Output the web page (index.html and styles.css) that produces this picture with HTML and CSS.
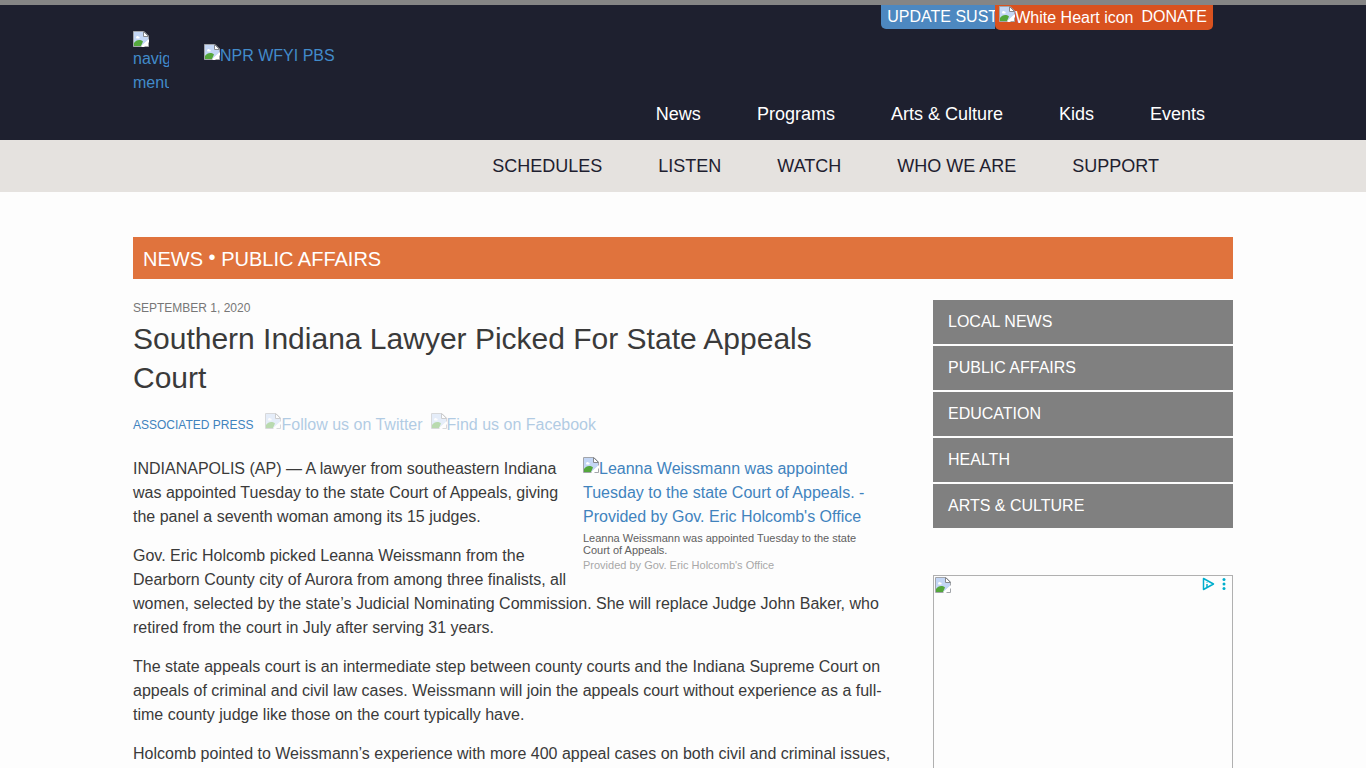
FILE: index.html
```html
<!DOCTYPE html>
<html lang="en">
<head>
<meta charset="utf-8">
<title>Southern Indiana Lawyer Picked For State Appeals Court</title>
<link rel="stylesheet" href="styles.css">
</head>
<body>
<svg class="defs" aria-hidden="true">
  <symbol id="missing" viewBox="0 0 16 16">
    <path d="M0.5 0.5H11L15.5 5V15.5H0.5Z" fill="#fff" stroke="#a2a5aa"/>
    <path d="M1 1H10.500V5.500H15V9L8 15H1Z" fill="#c3d6f5"/>
    <path d="M1 15V12C3 9 7 8 10 10.500L8 15Z" fill="#54a73c"/>
    <path d="M3 6.500C3 5 5 4.500 5.500 5.500C7 5.500 7 7.500 6 7.500H3.500Z" fill="#fff"/>
    <path d="M10.500 0.500V5.500H15.500Z" fill="#fff" stroke="#85888d"/>
    <path d="M16 8L8 16H11L16 11Z" fill="#fff"/>
  </symbol>
</svg>
<header class="masthead">
  <div class="container masthead-inner">
    <div class="brand-row">
      <a class="menu-link" href="#"><svg class="missing"><use href="#missing"/></svg>navigation menu</a>
      <a class="logo-link" href="#"><svg class="missing"><use href="#missing"/></svg>NPR WFYI PBS</a>
      <div class="actions">
        <a class="update" href="#">UPDATE SUST</a>
        <a class="donate" href="#"><span><svg class="missing"><use href="#missing"/></svg>White Heart icon</span><span>DONATE</span></a>
      </div>
    </div>
    <nav class="main-nav" aria-label="Topics">
      <a href="#">News</a><a href="#">Programs</a><a href="#">Arts &amp; Culture</a><a href="#">Kids</a><a href="#">Events</a>
    </nav>
  </div>
</header>
<div class="subbar">
  <nav class="container sub-nav" aria-label="Station">
    <a href="#">SCHEDULES</a><a href="#">LISTEN</a><a href="#">WATCH</a><a href="#">WHO WE ARE</a><a href="#">SUPPORT</a>
  </nav>
</div>
<main class="container">
  <div class="section-title"><a href="#">NEWS</a> <span class="dot">•</span> <a href="#">PUBLIC AFFAIRS</a></div>
  <div class="columns">
    <article class="story">
      <div class="date">SEPTEMBER 1, 2020</div>
      <h1>Southern Indiana Lawyer Picked For State Appeals Court</h1>
      <div class="byline">
        <a class="author" href="#">ASSOCIATED PRESS</a>
        <a class="social" href="#"><svg class="missing"><use href="#missing"/></svg>Follow us on Twitter</a>
        <a class="social" href="#"><svg class="missing"><use href="#missing"/></svg>Find us on Facebook</a>
      </div>
      <div class="body-text">
        <figure>
          <a href="#"><svg class="missing"><use href="#missing"/></svg>Leanna Weissmann was appointed Tuesday to the state Court of Appeals. - Provided by Gov. Eric Holcomb's Office</a>
          <figcaption><span class="caption">Leanna Weissmann was appointed Tuesday to the state Court of Appeals.</span><span class="credit">Provided by Gov. Eric Holcomb's Office</span></figcaption>
        </figure>
        <p>INDIANAPOLIS (AP) — A lawyer from southeastern Indiana was appointed Tuesday to the state Court of Appeals, giving the panel a seventh woman among its 15 judges.</p>
        <p>Gov. Eric Holcomb picked Leanna Weissmann from the Dearborn County city of Aurora from among three finalists, all women, selected by the state’s Judicial Nominating Commission. She will replace Judge John Baker, who retired from the court in July after serving 31 years.</p>
        <p>The state appeals court is an intermediate step between county courts and the Indiana Supreme Court on appeals of criminal and civil law cases. Weissmann will join the appeals court without experience as a full-time county judge like those on the court typically have.</p>
        <p>Holcomb pointed to Weissmann’s experience with more 400 appeal cases on both civil and criminal issues,</p>
      </div>
    </article>
    <aside class="sidebar">
      <nav class="side-nav" aria-label="News sections">
        <a href="#">LOCAL NEWS</a><a href="#">PUBLIC AFFAIRS</a><a href="#">EDUCATION</a><a href="#">HEALTH</a><a href="#">ARTS &amp; CULTURE</a>
      </nav>
      <div class="ad">
        <svg class="missing"><use href="#missing"/></svg>
        <svg class="adchoices" viewBox="0 0 28 14" aria-hidden="true">
          <path d="M2.500 1.500L12.500 7L2.500 12.500Z" fill="none" stroke="#00aecd" stroke-width="1.500" stroke-linejoin="round"/>
          <path d="M6 5V5.500M6 7V10" stroke="#00aecd" stroke-width="1.500" fill="none"/>
          <circle cx="23" cy="2.500" r="1.500" fill="#00aecd"/><circle cx="23" cy="7" r="1.500" fill="#00aecd"/><circle cx="23" cy="11.500" r="1.500" fill="#00aecd"/>
        </svg>
      </div>
    </aside>
  </div>
</main>
</body>
</html>
```
FILE: styles.css
```css
* { box-sizing: border-box; }
body {
  margin: 0;
  background: #fdfdfd;
  color: #3a3a3a;
  font: 16px/24px "Liberation Sans", Arial, sans-serif;
}
a { color: #4183bd; text-decoration: none; }
.defs { display: none; }
.missing { width: 16px; height: 16px; vertical-align: 1px; }
.container { width: 100%; max-width: 1100px; margin: 0 auto; }

.masthead { background: #1e202f; border-top: 5px solid #858585; }
.masthead a { color: #428bca; }
.brand-row { display: flex; align-items: flex-start; height: 83px; }
.menu-link { width: 36px; height: 64px; margin-top: 26px; overflow: hidden; }
.menu-link .missing { display: block; }
.logo-link { margin: 39px auto 0 35px; }
.actions { display: flex; align-items: flex-start; margin-right: 20px; }
.masthead .update {
  width: 114px;
  padding: 0 0 0 6px;
  overflow: hidden;
  white-space: nowrap;
  background: #4d88c0;
  color: #fff;
  border-bottom-left-radius: 5px;
}
.masthead .donate {
  display: flex;
  align-items: flex-start;
  gap: 8px;
  padding: 0 6px 0 4px;
  background: #d9521f;
  color: #fff;
  border-radius: 0 0 5px 5px;
}
.donate span:first-child { padding-top: 1px; }
.main-nav { display: flex; justify-content: flex-end; gap: 56px; padding: 14px 28px 14px 0; font-size: 18px; }
.masthead .main-nav a { color: #fff; }

.subbar { background: #e5e2df; }
.sub-nav { display: flex; justify-content: flex-end; gap: 56px; padding: 14px 74px 14px 0; font-size: 18px; }
.sub-nav a { color: #1e202f; }

.section-title {
  margin: 45px 0 21px;
  padding: 10px 10px 8px;
  background: #e0733d;
  color: #fff;
  font-size: 20px;
}
.section-title a { color: #fff; }
.dot { vertical-align: 2px; line-height: 16px; }

.columns { display: flex; justify-content: space-between; gap: 40px; }
.story { flex: 1; max-width: 760px; }
.date { font-size: 12px; line-height: 16px; color: #777; }
h1 { margin: 3px 0 16px; font-size: 30px; line-height: 39px; font-weight: 400; }
.byline { display: flex; align-items: flex-start; gap: 8px; margin-bottom: 20px; }
.author { margin-right: 4px; font-size: 12px; }
.social { opacity: 0.4; }
figure { float: right; width: 300px; margin: 0 10px 0 15px; padding-right: 10px; }
figcaption { padding-top: 3px; font-size: 11px; line-height: 12px; color: #606060; }
.credit { display: block; margin-top: 3px; color: #a8a8a8; }
p { margin: 0 0 15px; }

.sidebar { width: 300px; flex: none; }
.side-nav { display: flex; flex-direction: column; gap: 2px; margin-bottom: 47px; }
.side-nav a { padding: 10px 15px; background: #808080; color: #fff; }
.ad {
  display: flex;
  justify-content: space-between;
  height: 250px;
  padding: 1px 3px 1px 1px;
  border: 1px solid #b0b0b0;
}
.adchoices { width: 28px; height: 14px; }
```
